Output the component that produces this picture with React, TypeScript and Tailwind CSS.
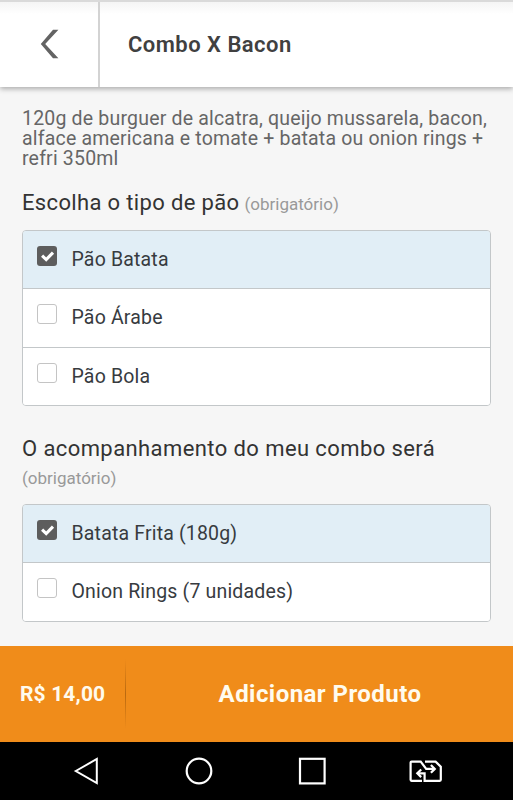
const groups = [
  {
    title: "Escolha o tipo de pão",
    titleClass: "tracking-[0.35px]",
    hintClass: "ml-[5px]",
    className: "mt-[19px]",
    listClass: "mt-[11px]",
    options: ["Pão Batata", "Pão Árabe", "Pão Bola"],
  },
  {
    title: "O acompanhamento do meu combo será",
    titleClass: "tracking-[0.41px]",
    hintClass: "block -mt-[1px]",
    className: "mt-[28px]",
    listClass: "mt-[11px]",
    options: ["Batata Frita (180g)", "Onion Rings (7 unidades)"],
  },
];

function Checkbox({ checked }: { checked: boolean }) {
  if (!checked) {
    return <span className="size-5 rounded-[3px] border border-[#c4c4c4] bg-white" />;
  }
  return (
    <span className="flex size-5 items-center justify-center rounded-[3px] bg-[#5d5d5d]">
      <svg width="20" height="20" viewBox="0 0 20 20" fill="none">
        <path d="M5.1 9.6 L9.2 13.5 L16 6.6" stroke="#fff" strokeWidth="3.1" />
      </svg>
    </span>
  );
}

function Option({ label, checked }: { label: string; checked: boolean }) {
  return (
    <li
      className={
        checked
          ? "flex h-[57px] gap-[14.5px] bg-[#e1eef6] pl-[14px] pt-[15px]"
          : "flex h-[58.5px] gap-[14.5px] border-t border-[#c3c7c9] bg-white pl-[14px] pt-[15px]"
      }
    >
      <Checkbox checked={checked} />
      <span className="text-[19.5px] leading-[28px] tracking-[0.17px] text-[#373b3f]">{label}</span>
    </li>
  );
}

function Header() {
  return (
    <header className="relative flex h-[87px] shrink-0 border-t-2 border-[#dadada] bg-linear-to-b from-[#f5f5f5] to-white to-[12px] shadow-[0_2px_5px_rgba(0,0,0,0.3)]">
      <div className="flex w-[100px] items-center justify-center border-r-2 border-[#d3d3d3] pb-px">
        <svg width="20" height="30" viewBox="0 0 20 30" fill="#636363">
          <path d="M14 0.8 H19.4 L6.2 15 L19.4 29.2 H14 L1.8 15 Z" />
        </svg>
      </div>
      <h1 className="flex items-center pl-[28px] text-[22px] font-semibold tracking-[0.47px] text-[#404040]">
        Combo X Bacon
      </h1>
    </header>
  );
}

function SystemNav() {
  return (
    <nav className="flex h-[58px] shrink-0 items-center bg-black pl-[70px]">
      <svg width="32" height="32" viewBox="0 0 32 32" fill="none" stroke="#fff" strokeWidth="2">
        <path d="M5.8 16 L26.8 4 V28 Z" />
      </svg>
      <svg className="ml-[81px]" width="32" height="32" viewBox="0 0 32 32" fill="none" stroke="#fff" strokeWidth="2.2">
        <circle cx="16" cy="16" r="12.3" />
      </svg>
      <svg className="ml-[81px]" width="32" height="32" viewBox="0 0 32 32" fill="none" stroke="#fff" strokeWidth="2.2">
        <rect x="4" y="3.8" width="24.6" height="24.6" />
      </svg>
      <svg className="ml-[79px]" width="36" height="32" viewBox="0 0 36 32" fill="none" stroke="#fff" strokeWidth="2.2">
        <path d="M15 25.8 H4.5 Q3.6 25.8 3.6 24.8 V7.6 Q3.6 6.6 4.6 6.6 H13.7 L19.2 13.9 H27" />
        <path d="M23.9 10 L27.8 13.9 L23.9 17.8" />
        <path d="M18 6.6 H28.6 L33.8 11.6 V24.8 Q33.8 25.8 32.8 25.8 H17.6 V18.3 H11" />
        <path d="M14.2 14.5 L10.3 18.3 L14.2 22.1" />
      </svg>
    </nav>
  );
}

export default function App() {
  return (
    <div className="flex h-[800px] w-[513px] flex-col overflow-hidden bg-[#f6f6f6] font-['Roboto',sans-serif]">
      <Header />
      <main className="flex-1 px-[22px] pt-[22px]">
        <p className="whitespace-nowrap text-[19.5px] leading-5 tracking-[0.19px] text-[#666]">
          120g de burguer de alcatra, queijo mussarela, bacon,
          <br />
          alface americana e tomate + batata ou onion rings +
          <br />
          refri 350ml
        </p>
        {groups.map((group) => (
          <section key={group.title} className={group.className}>
            <h2 className="text-[22px] leading-[30px] text-[#333]">
              <span className={group.titleClass}>{group.title}</span>
              <small className={`text-[17px] text-[#999] ${group.hintClass}`}>(obrigatório)</small>
            </h2>
            <ul className={`overflow-hidden rounded-[4px] border border-[#c3c7c9] ${group.listClass}`}>
              {group.options.map((label, i) => (
                <Option key={label} label={label} checked={i === 0} />
              ))}
            </ul>
          </section>
        ))}
      </main>
      <footer className="flex h-[96px] shrink-0 items-center bg-[#f08c1a] text-[#fffbee]">
        <span className="w-[125px] whitespace-nowrap pl-[20px] pt-[2px] text-[21px] font-bold tracking-[0.15px]">R$ 14,00</span>
        <span className="h-[70px] w-px bg-linear-to-b from-transparent via-[#b9690f] to-transparent" />
        <button className="flex-1 pb-px pl-px text-center text-[24px] font-bold tracking-[0.45px]">Adicionar Produto</button>
      </footer>
      <SystemNav />
    </div>
  );
}
